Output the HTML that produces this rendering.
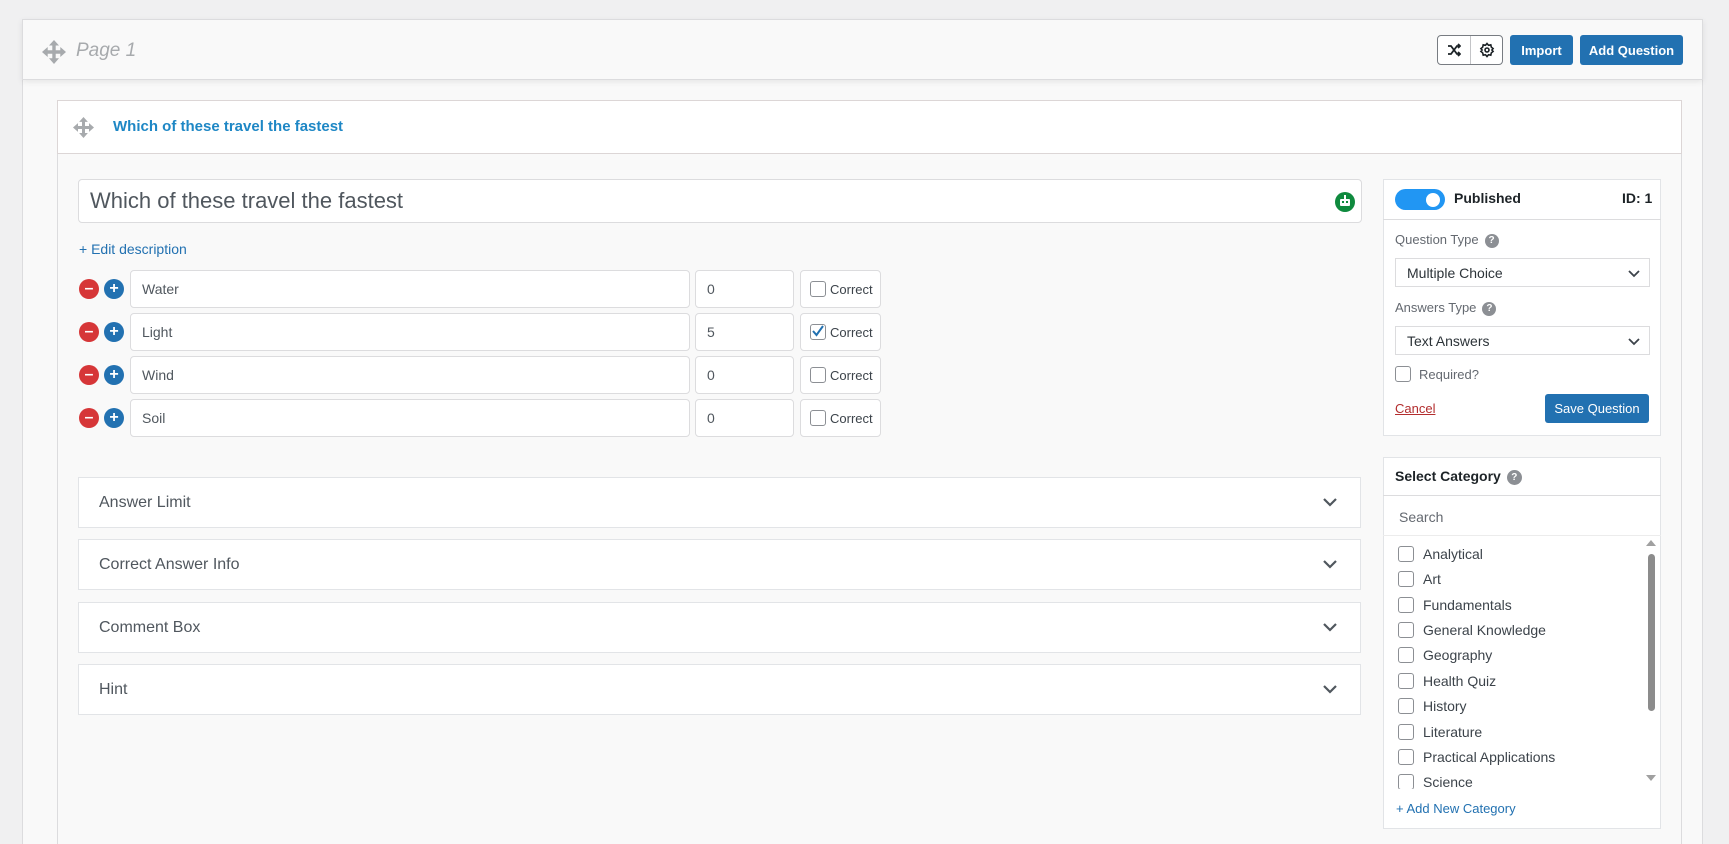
<!DOCTYPE html>
<html><head><meta charset="utf-8"><style>
*{box-sizing:border-box;margin:0;padding:0}
html{width:1729px;height:844px;overflow:hidden}
body{width:1729px;height:844px;overflow:hidden;background:#f0f0f1;font-family:"Liberation Sans",sans-serif;color:#3c434a;position:relative}
.a{position:absolute}
.inp{position:absolute;background:#fff;border:1px solid #dcdcde;border-radius:4px;font-size:14px;color:#50575e;display:flex;align-items:center;padding-left:11px}
.btn{position:absolute;background:#2271b1;color:#fff;border-radius:3px;font-size:13px;font-weight:bold;display:flex;align-items:center;justify-content:center}
.acc{position:absolute;left:78px;width:1283px;height:51px;background:#fff;border:1px solid #e2e4e7;font-size:16px;color:#50575e;display:flex;align-items:center;padding-left:20px}
.acc svg{position:absolute;right:22px;top:18px}
.cb{display:inline-block;width:16px;height:16px;border:1.5px solid #8c8f94;border-radius:3px;background:#fff;vertical-align:middle}
.circ{position:absolute;width:20px;height:20px;border-radius:50%;color:#fff;font-weight:bold;font-size:16px;line-height:19px;text-align:center}
.cat{position:absolute;left:1398px;font-size:14px;color:#3c434a;display:flex;align-items:center;gap:9px}
.q{display:inline-block;width:14px;height:14px;border-radius:50%;background:#8c8f94;color:#fff;font-size:10px;font-weight:bold;text-align:center;line-height:14px;vertical-align:middle;margin-left:6px}
.sel{position:absolute;left:1395px;width:255px;height:29px;background:#fff;border:1px solid #dcdcde;font-size:14px;color:#2c3338;display:flex;align-items:center;padding-left:11px}
.sel svg{position:absolute;right:8px;top:10px}
</style></head><body>
<!-- page panel -->
<div class="a" style="left:22px;top:19px;width:1681px;height:825px;background:#f9f9f9;border:1px solid #dcdcde;border-bottom:none"></div>
<div class="a" style="left:22px;top:19px;width:1681px;height:61px;background:#f9f9f9;border:1px solid #dcdcde;box-shadow:0 2px 6px rgba(0,0,0,0.08)"></div>
<svg class="a" style="left:42px;top:40px" width="24" height="24" viewBox="0 0 24 24" fill="#a7aaad"><path d="M12 0l5 5.5h-3.3V10.3h4.6V7l5.7 5-5.7 5v-3.3h-4.6v4.6H17L12 24l-5-5.7h3.3v-4.6H5.7V17L0 12l5.7-5v3.3h4.6V5.5H7z"/></svg>
<div class="a" style="left:76px;top:40px;font-size:19px;font-style:italic;color:#a7aaad">Page 1</div>
<div class="a" style="left:1437px;top:35px;width:66px;height:30px;border:1px solid #787c82;border-radius:4px;background:#fff"></div>
<div class="a" style="left:1470px;top:36px;width:1px;height:28px;background:#c3c4c7"></div>
<svg class="a" style="left:1447px;top:43px" width="14" height="14" viewBox="0 0 14 14" fill="none" stroke="#1d2327" stroke-width="1.8"><path d="M1 3h3l6 8h3M1 11h3l6-8h3M11 1l2 2-2 2M11 9l2 2-2 2"/></svg>
<svg class="a" style="left:1479px;top:42px" width="16" height="16" viewBox="0 0 16 16" fill="none" stroke="#1d2327" stroke-width="1.6"><circle cx="8" cy="8" r="2"/><path d="M8 1.5l1.5 1.8 2.3-.5.5 2.3 1.8 1.5-1.2 1.4 1.2 1.4-1.8 1.5-.5 2.3-2.3-.5L8 14.5l-1.5-1.8-2.3.5-.5-2.3L1.9 9.4 3.1 8 1.9 6.6l1.8-1.5.5-2.3 2.3.5z"/></svg>
<div class="btn" style="left:1510px;top:35px;width:63px;height:30px">Import</div>
<div class="btn" style="left:1580px;top:35px;width:103px;height:30px">Add Question</div>

<!-- question panel -->
<div class="a" style="left:57px;top:100px;width:1625px;height:744px;background:#f9f9f9;border:1px solid #dcdcde;border-bottom:none"></div>
<div class="a" style="left:57px;top:100px;width:1625px;height:54px;background:#fff;border:1px solid #dcd6d6"></div>
<svg class="a" style="left:73px;top:117px" width="21" height="21" viewBox="0 0 24 24" fill="#a7aaad"><path d="M12 0l5 5.5h-3.3V10.3h4.6V7l5.7 5-5.7 5v-3.3h-4.6v4.6H17L12 24l-5-5.7h3.3v-4.6H5.7V17L0 12l5.7-5v3.3h4.6V5.5H7z"/></svg>
<div class="a" style="left:113px;top:118px;font-size:15px;font-weight:bold;color:#1e87c5">Which of these travel the fastest</div>

<div class="inp" style="left:78px;top:179px;width:1284px;height:44px;font-size:22px;color:#50575e">Which of these travel the fastest</div>
<div class="a" style="left:1335px;top:192px;width:20px;height:20px;border-radius:50%;background:#0f8a3e"></div>
<div class="a" style="left:1340px;top:199px;width:10px;height:7px;background:#fff;border-radius:1px"></div>
<div class="a" style="left:1342px;top:201px;width:2px;height:2px;background:#0f8a3e"></div>
<div class="a" style="left:1346px;top:201px;width:2px;height:2px;background:#0f8a3e"></div>
<div class="a" style="left:1344px;top:195px;width:2px;height:4px;background:#fff"></div>
<div class="a" style="left:79px;top:241px;font-size:14px;color:#2271b1">+ Edit description</div>

<!-- answers -->
<div class="circ" style="left:79px;top:279px;background:#d63638">–</div><div class="circ" style="left:104px;top:279px;background:#2271b1">+</div>
<div class="inp" style="left:130px;top:270px;width:560px;height:38px">Water</div>
<div class="inp" style="left:695px;top:270px;width:99px;height:38px">0</div>
<div class="inp" style="left:800px;top:270px;width:81px;height:38px;padding-left:9px;font-size:13px;color:#3c434a"><span class="cb" style="margin-right:4px"></span>Correct</div>

<div class="circ" style="left:79px;top:322px;background:#d63638">–</div><div class="circ" style="left:104px;top:322px;background:#2271b1">+</div>
<div class="inp" style="left:130px;top:313px;width:560px;height:38px">Light</div>
<div class="inp" style="left:695px;top:313px;width:99px;height:38px">5</div>
<div class="inp" style="left:800px;top:313px;width:81px;height:38px;padding-left:9px;font-size:13px;color:#3c434a"><span class="cb" style="margin-right:4px;position:relative"><svg style="position:absolute;left:0;top:-1px" width="14" height="14" viewBox="0 0 14 14"><path d="M2 7l3.5 4L12 2" fill="none" stroke="#2271b1" stroke-width="2"/></svg></span>Correct</div>

<div class="circ" style="left:79px;top:365px;background:#d63638">–</div><div class="circ" style="left:104px;top:365px;background:#2271b1">+</div>
<div class="inp" style="left:130px;top:356px;width:560px;height:38px">Wind</div>
<div class="inp" style="left:695px;top:356px;width:99px;height:38px">0</div>
<div class="inp" style="left:800px;top:356px;width:81px;height:38px;padding-left:9px;font-size:13px;color:#3c434a"><span class="cb" style="margin-right:4px"></span>Correct</div>

<div class="circ" style="left:79px;top:408px;background:#d63638">–</div><div class="circ" style="left:104px;top:408px;background:#2271b1">+</div>
<div class="inp" style="left:130px;top:399px;width:560px;height:38px">Soil</div>
<div class="inp" style="left:695px;top:399px;width:99px;height:38px">0</div>
<div class="inp" style="left:800px;top:399px;width:81px;height:38px;padding-left:9px;font-size:13px;color:#3c434a"><span class="cb" style="margin-right:4px"></span>Correct</div>

<!-- accordions -->
<div class="acc" style="top:477px">Answer Limit<svg width="16" height="12" viewBox="0 0 16 12"><path d="M2 3l6 6 6-6" fill="none" stroke="#50575e" stroke-width="2.2"/></svg></div>
<div class="acc" style="top:539px">Correct Answer Info<svg width="16" height="12" viewBox="0 0 16 12"><path d="M2 3l6 6 6-6" fill="none" stroke="#50575e" stroke-width="2.2"/></svg></div>
<div class="acc" style="top:602px">Comment Box<svg width="16" height="12" viewBox="0 0 16 12"><path d="M2 3l6 6 6-6" fill="none" stroke="#50575e" stroke-width="2.2"/></svg></div>
<div class="acc" style="top:664px">Hint<svg width="16" height="12" viewBox="0 0 16 12"><path d="M2 3l6 6 6-6" fill="none" stroke="#50575e" stroke-width="2.2"/></svg></div>

<!-- publish box -->
<div class="a" style="left:1383px;top:179px;width:278px;height:257px;background:#fff;border:1px solid #e2e4e7"></div>
<div class="a" style="left:1383px;top:219px;width:278px;height:1px;background:#dcdcde"></div>
<div class="a" style="left:1395px;top:189px;width:50px;height:21px;border-radius:11px;background:#2196f3"></div>
<div class="a" style="left:1426px;top:193px;width:14px;height:14px;border-radius:50%;background:#fff"></div>
<div class="a" style="left:1454px;top:190px;font-size:14px;font-weight:bold;color:#1d2327">Published</div>
<div class="a" style="left:1622px;top:190px;font-size:14px;font-weight:bold;color:#1d2327">ID: 1</div>
<div class="a" style="left:1395px;top:232px;font-size:13px;color:#646970">Question Type<span class="q">?</span></div>
<div class="sel" style="top:258px">Multiple Choice<svg width="14" height="10" viewBox="0 0 14 10"><path d="M2 2l5 5 5-5" fill="none" stroke="#3c434a" stroke-width="1.8"/></svg></div>
<div class="a" style="left:1395px;top:300px;font-size:13px;color:#646970">Answers Type<span class="q">?</span></div>
<div class="sel" style="top:326px">Text Answers<svg width="14" height="10" viewBox="0 0 14 10"><path d="M2 2l5 5 5-5" fill="none" stroke="#3c434a" stroke-width="1.8"/></svg></div>
<div class="a" style="left:1395px;top:366px;font-size:13px;color:#646970;display:flex;align-items:center;gap:8px"><span class="cb"></span>Required?</div>
<div class="a" style="left:1395px;top:401px;font-size:13px;color:#b32d2e;text-decoration:underline">Cancel</div>
<div class="btn" style="left:1545px;top:394px;width:104px;height:29px;font-weight:normal;font-size:13px">Save Question</div>

<!-- category box -->
<div class="a" style="left:1383px;top:457px;width:278px;height:372px;background:#fff;border:1px solid #e2e4e7"></div>
<div class="a" style="left:1383px;top:495px;width:278px;height:1px;background:#dcdcde"></div>
<div class="a" style="left:1383px;top:535px;width:278px;height:1px;background:#ececec"></div>
<div class="a" style="left:1395px;top:468px;font-size:14px;font-weight:bold;color:#1d2327">Select Category<span class="q" style="width:15px;height:15px;line-height:15px">?</span></div>
<div class="a" style="left:1399px;top:509px;font-size:14px;color:#646970">Search</div>
<div class="a" style="left:1384px;top:536px;width:276px;height:253px;overflow:hidden">
<div class="cat" style="left:14px;top:10px"><span class="cb"></span>Analytical</div>
<div class="cat" style="left:14px;top:35px"><span class="cb"></span>Art</div>
<div class="cat" style="left:14px;top:61px"><span class="cb"></span>Fundamentals</div>
<div class="cat" style="left:14px;top:86px"><span class="cb"></span>General Knowledge</div>
<div class="cat" style="left:14px;top:111px"><span class="cb"></span>Geography</div>
<div class="cat" style="left:14px;top:137px"><span class="cb"></span>Health Quiz</div>
<div class="cat" style="left:14px;top:162px"><span class="cb"></span>History</div>
<div class="cat" style="left:14px;top:188px"><span class="cb"></span>Literature</div>
<div class="cat" style="left:14px;top:213px"><span class="cb"></span>Practical Applications</div>
<div class="cat" style="left:14px;top:238px"><span class="cb"></span>Science</div>
</div>
<div class="a" style="left:1646px;top:540px;width:0;height:0;border-left:5px solid transparent;border-right:5px solid transparent;border-bottom:6px solid #a0a0a0"></div>
<div class="a" style="left:1648px;top:554px;width:7px;height:157px;border-radius:4px;background:#8c8c8c"></div>
<div class="a" style="left:1646px;top:775px;width:0;height:0;border-left:5px solid transparent;border-right:5px solid transparent;border-top:6px solid #a0a0a0"></div>
<div class="a" style="left:1396px;top:801px;font-size:13px;color:#2271b1">+ Add New Category</div>
</body></html>
